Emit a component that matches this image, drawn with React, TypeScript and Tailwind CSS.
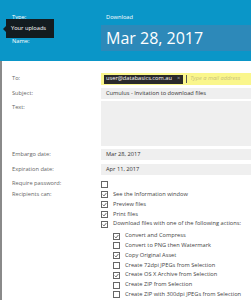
const font = { fontFamily: '"Open Sans", "Liberation Sans", sans-serif' }

function Box({ checked }: { checked?: boolean }) {
  return (
    <span className="w-[7px] h-[7px] border border-[#666] bg-white flex items-center justify-center shrink-0">
      {checked && (
        <svg width="5" height="5" viewBox="0 0 10 10" className="block">
          <path d="M1.5 5.2 L4 7.8 L8.8 2" fill="none" stroke="#444" strokeWidth="1.6" />
        </svg>
      )}
    </span>
  )
}

function CheckRow({ label, checked, indent }: { label: string; checked?: boolean; indent?: boolean }) {
  return (
    <div className={`flex items-center gap-[5px] h-[9.8px] ${indent ? 'pl-[12px]' : ''}`}>
      <Box checked={checked} />
      <span className="text-[5.7px] text-[#444] leading-none whitespace-nowrap">{label}</span>
    </div>
  )
}

function Label({ children }: { children: React.ReactNode }) {
  return <div className="w-[89px] shrink-0 text-[5.7px] text-[#666] leading-none">{children}</div>
}

const actions: [string, boolean][] = [
  ['Convert and Compress', true],
  ['Convert to PNG then Watermark', false],
  ['Copy Original Asset', true],
  ['Create 72dpi JPEGs from Selection', false],
  ['Create OS X Archive from Selection', true],
  ['Create ZIP from Selection', false],
  ['Create ZIP with 300dpi JPEGs from Selection', false],
]

export default function App() {
  return (
    <div className="w-[251px] h-[300px] bg-white overflow-hidden" style={font}>
      {/* header */}
      <div className="relative h-[61px] bg-[#0a96c8] pl-[12px] pt-[14px]">
        <div className="flex items-center h-[8px]">
          <div className="w-[89px] text-[5.7px] text-white leading-none">Type:</div>
          <div className="pl-[5px] text-[5.7px] text-white leading-none">Download</div>
        </div>
        <div className="flex items-center mt-[3px]">
          <div className="w-[89px] text-[5.7px] text-white leading-none pt-[8px]">Name:</div>
          <div className="flex-1 h-[26px] bg-[#2d89b9] flex items-center pl-[5px] text-[16px] text-white leading-none">
            Mar 28, 2017
          </div>
        </div>
        {/* tooltip */}
        <div className="absolute left-[6px] top-[19px] h-[19px] w-[48px] bg-[#131c20] flex items-center pl-[5px] text-[5.7px] text-white leading-none whitespace-nowrap">
          Your uploads
          <span className="absolute left-[-3px] top-[7px] w-0 h-0 border-y-[3px] border-y-transparent border-r-[3px] border-r-[#131c20]" />
        </div>
      </div>

      {/* form */}
      <div className="border-l-2 border-[#8a8a8a] h-[239px] pl-[10px] pt-[12px]">
        <div className="flex items-center h-[12px]">
          <Label>To:</Label>
          <div className="flex-1 h-[12px] bg-[#faf68c] flex items-center pl-[3px] gap-[3px] overflow-hidden">
            <span className="h-[9px] bg-[#2a2a2a] text-white text-[5.7px] leading-none flex items-center pl-[2px] pr-[3px] gap-[5px] whitespace-nowrap">
              user@databasics.com.au <span className="text-[#aaa]">×</span>
            </span>
            <span className="w-px h-[8px] bg-[#555] shrink-0" />
            <span className="text-[5.7px] italic text-[#c9c27a] leading-none whitespace-nowrap">Type a mail address</span>
          </div>
        </div>
        <div className="flex items-center h-[11px] mt-[3px]">
          <Label>Subject:</Label>
          <div className="flex-1 h-[11px] bg-[#efefef] flex items-center pl-[5px] text-[5.7px] text-[#333] leading-none whitespace-nowrap">
            Cumulus - Invitation to download files
          </div>
        </div>
        <div className="flex items-start mt-[2px]">
          <div className="pt-[4px]"><Label>Text:</Label></div>
          <div className="flex-1 h-[45px] bg-[#efefef]" />
        </div>
        <div className="flex items-center h-[11px] mt-[3px]">
          <Label>Embargo date:</Label>
          <div className="flex-1 h-[11px] bg-[#efefef] flex items-center pl-[5px] text-[5.7px] text-[#333] leading-none">Mar 28, 2017</div>
        </div>
        <div className="flex items-center h-[11px] mt-[4px]">
          <Label>Expiration date:</Label>
          <div className="flex-1 h-[11px] bg-[#efefef] flex items-center pl-[5px] text-[5.7px] text-[#333] leading-none">Apr 11, 2017</div>
        </div>
        <div className="flex items-center h-[10px] mt-[4px]">
          <Label>Require password:</Label>
          <Box />
        </div>
        <div className="flex items-start mt-[1px]">
          <div className="pt-[2px]"><Label>Recipients can:</Label></div>
          <div className="flex flex-col">
            <CheckRow label="See the Information window" checked />
            <CheckRow label="Preview files" checked />
            <CheckRow label="Print files" checked />
            <CheckRow label="Download files with one of the following actions:" checked />
            <div className="h-[2px]" />
            {actions.map(([l, c]) => (
              <CheckRow key={l} label={l} checked={c} indent />
            ))}
          </div>
        </div>
      </div>
    </div>
  )
}
